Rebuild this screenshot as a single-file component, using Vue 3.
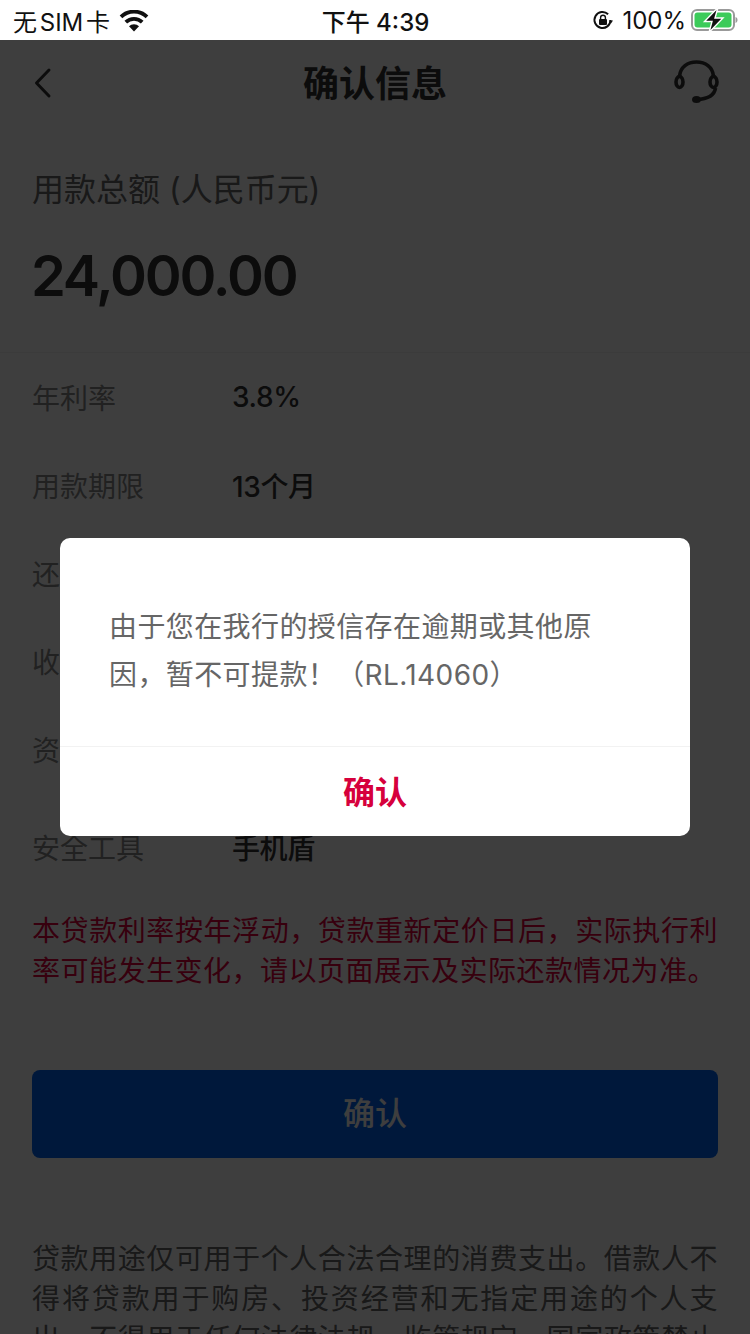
<template>
  <div class="screen">
    <div class="status-bar">
      <div class="status-left">
        <span class="carrier">无 SIM 卡</span>
        <svg class="wifi" width="30" height="22" viewBox="0 0 30 22">
          <path d="M15 21.500l-5-5.200a7 7 0 0 1 10 0z" fill="#111" />
          <path d="M6.800 12.200a11.800 11.800 0 0 1 16.400 0" fill="none" stroke="#111" stroke-width="3.800" />
          <path d="M2 6.800a18.800 18.800 0 0 1 26 0" fill="none" stroke="#111" stroke-width="3.800" />
        </svg>
      </div>
      <div class="status-time">下午 4:39</div>
      <div class="status-right">
        <svg width="22" height="22" viewBox="0 0 22 22">
          <path d="M18.500 11a8 8 0 1 1-2.400-5.700" fill="none" stroke="#111" stroke-width="2" />
          <path d="M17 11.500l4-.1-2 3z" fill="#111" />
          <rect x="7" y="10" width="8" height="6" rx="1" fill="#111" />
          <path d="M8.600 10V8.600a2.400 2.400 0 0 1 4.800 0V10" fill="none" stroke="#111" stroke-width="1.400" />
        </svg>
        <span class="battery-text">100%</span>
        <svg width="47" height="26" viewBox="0 0 47 26">
          <rect x="1" y="3" width="42" height="20" rx="5" fill="none" stroke="#9a9a9a" stroke-width="2" />
          <rect x="3.500" y="5.500" width="37" height="15" rx="3" fill="#3ccb5a" />
          <path d="M44.500 10c1.400.4 2 1.600 2 3s-.6 2.600-2 3z" fill="#9a9a9a" />
          <path d="M27 .5L13.500 14.500H21L18 25.500 32 11H24z" fill="#111" stroke="#fff" stroke-width="1.400" />
        </svg>
      </div>
    </div>

    <div class="page">
      <div class="nav">
        <svg class="back" width="20" height="32" viewBox="0 0 20 32">
          <path d="M16 3L3.500 16 16 29" fill="none" stroke="#333" stroke-width="3" stroke-linecap="round" stroke-linejoin="round" />
        </svg>
        <div class="nav-title">确认信息</div>
        <svg class="service" width="46" height="44" viewBox="0 0 46 44">
          <path d="M5.500 16C6.500 7 13.500 2 22.500 2s16 5 17 14" fill="none" stroke="#333" stroke-width="3.600" />
          <ellipse cx="5.500" cy="22" rx="3.500" ry="5.500" fill="none" stroke="#333" stroke-width="3.600" />
          <ellipse cx="39.500" cy="22" rx="3.500" ry="5.500" fill="none" stroke="#333" stroke-width="3.600" />
          <path d="M41.500 28c-1 7-7 11-19 11.500" fill="none" stroke="#333" stroke-width="3.600" />
          <ellipse cx="22.500" cy="39.500" rx="4.500" ry="3.500" fill="#333" />
        </svg>
      </div>

      <div class="amount-block">
        <div class="amount-label">用款总额 (人民币元)</div>
        <div class="amount">24,000.00</div>
      </div>

      <div class="rows">
        <div v-for="row in rows" :key="row.label" class="row">
          <span class="row-label">{{ row.label }}</span>
          <span class="row-value">{{ row.value }}</span>
        </div>
      </div>
      <div class="row">
        <span class="row-label">安全工具</span>
        <span class="row-value">手机盾</span>
      </div>

      <p class="warning">本贷款利率按年浮动，贷款重新定价日后，实际执行利率可能发生变化，请以页面展示及实际还款情况为准。</p>

      <button class="submit">确认</button>

      <p class="notice">贷款用途仅可用于个人合法合理的消费支出。借款人不得将贷款用于购房、投资经营和无指定用途的个人支出，不得用于任何法律法规、监管规定、国家政策禁止的领域。</p>
    </div>

    <div class="mask"></div>

    <div class="dialog">
      <p class="dialog-text">由于您在我行的授信存在逾期或其他原因，暂不可提款！（RL.14060）</p>
      <div class="dialog-action">确认</div>
    </div>
  </div>
</template>

<script setup>
const rows = [
  { label: '年利率', value: '3.8%' },
  { label: '用款期限', value: '13个月' },
  { label: '还款方式', value: '' },
  { label: '收款账户', value: '' },
  { label: '资金用途', value: '' }
]
</script>

<style>
html,
body {
  margin: 0;
  background: #fff;
}
</style>

<style scoped>
.screen {
  position: relative;
  width: 750px;
  height: 1334px;
  overflow: hidden;
  background: #fff;
  font-family: "Inter", "Noto Sans CJK SC", sans-serif;
  color: #333;
}

.status-bar {
  position: relative;
  z-index: 3;
  display: grid;
  grid-template-columns: 1fr auto 1fr;
  align-items: center;
  height: 40px;
  padding: 0 12px 0 13px;
  box-sizing: border-box;
  background: #fff;
  color: #111;
  font-size: 24px;
}

.status-left {
  display: flex;
  align-items: center;
  gap: 9px;
}

.carrier {
  word-spacing: -4px;
}

.wifi {
  margin-top: 2px;
}

.status-time {
  font-size: 24px;
  font-weight: 500;
}

.status-right {
  display: flex;
  align-items: center;
  justify-content: flex-end;
  gap: 8px;
}

.battery-text {
  margin-right: -3px;
}

.nav {
  display: grid;
  grid-template-columns: 1fr auto 1fr;
  align-items: center;
  height: 86px;
  padding: 0 30px;
}

.back {
  margin-left: 3px;
}

.nav-title {
  margin-bottom: 4px;
  font-size: 36px;
  font-weight: 700;
  color: #333;
}

.service {
  justify-self: end;
  margin-bottom: 2px;
}

.amount-block {
  padding: 44px 32px 41px;
  border-bottom: 1px solid #f2f2f2;
}

.amount-label {
  font-size: 32px;
  line-height: 40px;
  color: #666;
}

.amount {
  margin-top: 31px;
  margin-left: -1px;
  font-size: 56px;
  line-height: 70px;
  font-weight: 600;
  letter-spacing: -2.200px;
  color: #333;
}

.rows {
  padding-bottom: 10px;
}

.row {
  display: flex;
  align-items: center;
  height: 88px;
  padding: 0 32px;
  font-size: 28px;
}

.row-label {
  width: 200px;
  color: #8a8a8a;
}

.row-value {
  font-weight: 500;
  letter-spacing: -0.4px;
  color: #333;
}

.warning {
  margin: 20px 32px 0;
  font-size: 28px;
  line-height: 40px;
  letter-spacing: 0.5px;
  text-align: justify;
  color: #e0003c;
}

.submit {
  display: block;
  width: 686px;
  height: 88px;
  margin: 79px 32px 0;
  padding: 0 0 6px;
  border: 0;
  border-radius: 8px;
  background: #0064f0;
  color: #fff;
  font-family: inherit;
  font-size: 32px;
  font-weight: 500;
}

.notice {
  margin: 81px 32px 0;
  font-size: 28px;
  line-height: 40px;
  letter-spacing: 0.5px;
  text-align: justify;
  color: #666;
}

.mask {
  position: absolute;
  inset: 40px 0 0;
  z-index: 1;
  background: rgba(0, 0, 0, 0.755);
}

.dialog {
  position: absolute;
  top: 538px;
  left: 60px;
  z-index: 2;
  width: 630px;
  border-radius: 10px;
  background: #fff;
}

.dialog-text {
  margin: 0;
  padding: 65px 49px 47px;
  font-size: 28px;
  line-height: 48px;
  letter-spacing: 0.4px;
  color: #666;
}

.dialog-action {
  height: 87px;
  padding-top: 2px;
  line-height: 87px;
  border-top: 1px solid #f2f2f2;
  text-align: center;
  font-size: 32px;
  font-weight: 700;
  color: #d6003c;
}
</style>
